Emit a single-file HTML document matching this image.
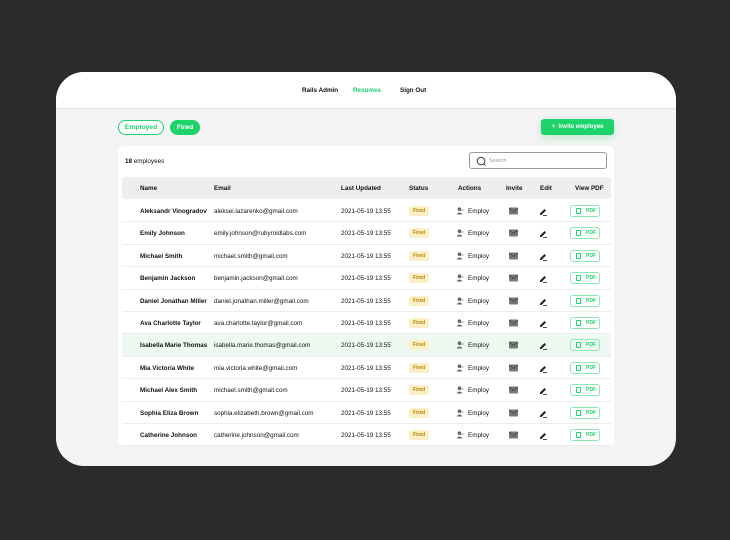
<!DOCTYPE html><html><head><style>
*{margin:0;padding:0;box-sizing:border-box}
body{width:730px;height:540px;background:#2b2b2b;font-family:"Liberation Sans",sans-serif;position:relative;overflow:hidden;color:#111}
.card{position:absolute;left:56px;top:72px;width:620px;height:394px;border-radius:28px;background:#f4f4f4;overflow:hidden}
.hdr{height:37px;background:#fff;border-bottom:1px solid #e4e4e4;position:relative;font-size:6.3px;font-weight:bold}
.hdr span{position:absolute;top:14.5px}
.pill{position:absolute;top:48px;height:15px;border-radius:8px;font-size:6.8px;line-height:14px;text-align:center;font-weight:bold}
.inv{position:absolute;left:485px;top:47px;width:73px;height:16px;background:#1fd36b;border-radius:3px;color:#fff;font-size:6px;font-weight:bold;line-height:17px;text-align:center;box-shadow:0 3px 8px rgba(31,211,107,.25)}
.tbl{position:absolute;left:62px;top:74px;width:496px;height:300px;background:#fff;border-radius:6px}
.search{position:absolute;left:351px;top:6px;width:138px;height:17px;border:1px solid #999;border-radius:3px;font-size:5.5px;color:#999;line-height:16px;padding-left:19px}
.th{position:absolute;left:4px;top:31px;width:489px;height:22px;background:#eee;border-radius:3px;font-size:6.3px;font-weight:bold}
.th span,.r span,.r svg{position:absolute}
.th span{top:8px}
.r{position:absolute;left:4px;width:489px;height:22.4px;border-bottom:1px solid #ececec;font-size:6.3px}
.r span{top:8px}
.f{background:#fdf0c6;color:#b8860b;font-size:5px;padding:2px 4px;border-radius:2px;top:6px!important;font-weight:bold}
.pdf{border:1px solid #8ee6b1;color:#1fd36b;border-radius:3px;width:30px;height:12px;top:5px!important;font-size:5px;font-weight:bold;line-height:10px;padding-left:15px}
.pdf i{position:absolute;left:5px;top:2px;width:5px;height:6px;border:1px solid #1fd36b;border-radius:1px}
</style></head><body>
<div class="card">
<div class="hdr"><span style="left:246px">Rails Admin</span><span style="left:297px;color:#1fd36b">Resumes</span><span style="left:344px">Sign Out</span></div>
<div class="pill" style="left:62px;width:46px;border:1px solid #1fd36b;color:#1fd36b;background:#fff">Employed</div>
<div class="pill" style="left:114px;width:30px;background:#1fd36b;color:#fff;border:1px solid #1fd36b">Fired</div>
<div class="inv">+&nbsp; Invite employee</div>
<div class="tbl">
<div style="position:absolute;left:7px;top:11.5px;font-size:6.3px"><b>18</b> employees</div>
<div class="search"><svg style="position:absolute;left:6px;top:3px" width="10" height="10"><circle cx="5" cy="5" r="3.8" fill="none" stroke="#333" stroke-width="1"/><line x1="8" y1="8" x2="9.5" y2="9.5" stroke="#333"/></svg>Search</div>
<div class="th"><span style="left:18px">Name</span><span style="left:92px">Email</span><span style="left:219px">Last Updated</span><span style="left:287px">Status</span><span style="left:336px">Actions</span><span style="left:384px">Invite</span><span style="left:418px">Edit</span><span style="left:453px">View PDF</span></div>
<div id="rows"></div>
</div></div>
<script>
var d=[["Aleksandr Vinogradov","aleksei.lazarenko@gmail.com"],["Emily Johnson","emily.johnson@rubyroidlabs.com"],["Michael Smith","michael.smith@gmail.com"],["Benjamin Jackson","benjamin.jackson@gmail.com"],["Daniel Jonathan Miller","daniel.jonathan.miller@gmail.com"],["Ava Charlotte Taylor","ava.charlotte.taylor@gmail.com"],["Isabella Marie Thomas","isabella.marie.thomas@gmail.com"],["Mia Victoria White","mia.victoria.white@gmail.com"],["Michael Alex Smith","michael.smith@gmail.com"],["Sophia Eliza Brown","sophia.elizabeth.brown@gmail.com"],["Catherine Johnson","catherine.johnson@gmail.com"]];
var person='<svg style="left:334px;top:7px" width="8" height="8"><circle cx="3.5" cy="2.2" r="1.8" fill="#666"/><path d="M0.5 7.5 Q3.5 3.5 6.5 7.5Z" fill="#666"/><line x1="5.5" y1="3" x2="7.5" y2="3" stroke="#666" stroke-width="0.7"/></svg>';
var env='<svg style="left:387px;top:7px" width="10" height="8"><rect x="0" y="0.5" width="9" height="7" rx="1" fill="#777"/><path d="M0 1 L4.5 4.5 L9 1" fill="none" stroke="#444" stroke-width="0.8"/></svg>';
var pen='<svg style="left:417px;top:7px" width="9" height="9"><path d="M1 6.5 L5.5 2 L7 3.5 L2.5 8 L1 8Z" fill="#222"/><line x1="4" y1="8.5" x2="8" y2="8.5" stroke="#222" stroke-width="0.8"/></svg>';
var h="";d.forEach(function(x,i){h+='<div class="r" style="top:'+(54+i*22.4)+'px;'+(i==6?'background:#edf9f1;':'')+'"><span style="left:18px;font-weight:bold">'+x[0]+'</span><span style="left:92px">'+x[1]+'</span><span style="left:219px">2021-05-19 13:55</span><span class="f" style="left:287px">Fired</span>'+person+'<span style="left:346px">Employ</span>'+env+pen+'<span class="pdf" style="left:448px"><i></i>PDF</span></div>'});
document.getElementById("rows").innerHTML=h;
</script>
</body></html>
